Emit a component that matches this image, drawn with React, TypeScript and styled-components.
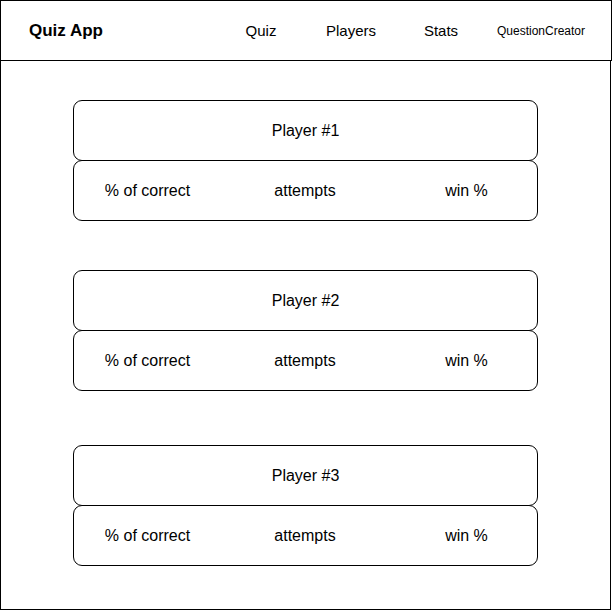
import React from "react";
import styled, { createGlobalStyle } from "styled-components";

const GlobalStyle = createGlobalStyle`
  html, body {
    margin: 0;
    padding: 0;
    background: #ffffff;
  }
  body {
    font-family: "Liberation Sans", Arial, Helvetica, sans-serif;
    color: #000;
  }
  * { box-sizing: border-box; }
`;

const Page = styled.div`
  width: 612px;
  display: flex;
  flex-direction: column;
`;

const Header = styled.header`
  width: 612px;
  height: 61px;
  border: 1px solid #000;
  display: flex;
  align-items: center;
  padding-left: 28px;
`;

const Brand = styled.div`
  font-size: 17px;
  font-weight: 700;
  width: 187px;
`;

const Nav = styled.nav`
  display: flex;
  align-items: center;
`;

const NavItem = styled.a<{ $w: number; $size?: number }>`
  width: ${(p) => p.$w}px;
  text-align: center;
  font-size: ${(p) => p.$size ?? 15}px;
  color: #000;
  text-decoration: none;
`;

const Main = styled.main`
  width: 611px;
  height: 549px;
  border: 1px solid #000;
  border-top: none;
  padding: 39px 0 0 72px;
  display: flex;
  flex-direction: column;
`;

const Card = styled.section<{ $top: number }>`
  width: 465px;
  margin-top: ${(p) => p.$top}px;
  display: flex;
  flex-direction: column;
`;

const Box = styled.div`
  height: 61px;
  border: 1px solid #000;
  border-radius: 9px;
  background: #fff;
  font-size: 16px;
`;

const TitleBox = styled(Box)`
  display: flex;
  align-items: center;
  justify-content: center;
`;

const StatsBox = styled(Box)`
  margin-top: -1px;
  display: grid;
  grid-template-columns: 147px 168px 1fr;
  align-items: center;
`;

const Stat = styled.div<{ $shift?: number }>`
  text-align: center;
  padding-left: ${(p) => p.$shift ?? 0}px;
`;

const players = [
  { name: "Player #1", top: 0 },
  { name: "Player #2", top: 49 },
  { name: "Player #3", top: 54 },
];

export default function App() {
  return (
    <>
      <GlobalStyle />
      <Page>
        <Header>
          <Brand>Quiz App</Brand>
          <Nav>
            <NavItem $w={90}>Quiz</NavItem>
            <NavItem $w={90}>Players</NavItem>
            <NavItem $w={90}>Stats</NavItem>
            <NavItem $w={110} $size={12}>QuestionCreator</NavItem>
          </Nav>
        </Header>
        <Main>
          {players.map((p) => (
            <Card key={p.name} $top={p.top}>
              <TitleBox>{p.name}</TitleBox>
              <StatsBox>
                <Stat>% of correct</Stat>
                <Stat>attempts</Stat>
                <Stat $shift={7}>win %</Stat>
              </StatsBox>
            </Card>
          ))}
        </Main>
      </Page>
    </>
  );
}
